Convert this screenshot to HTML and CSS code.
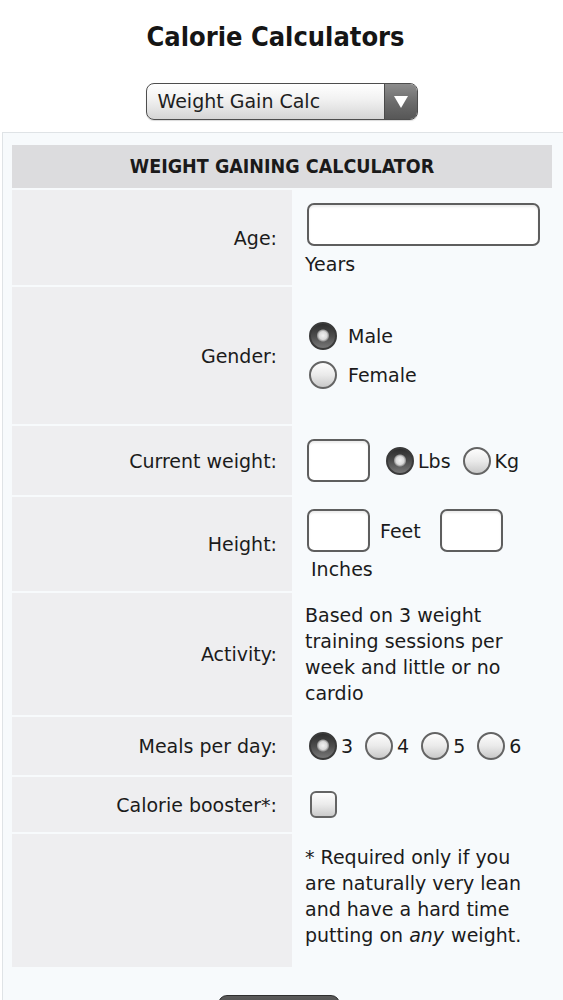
FILE: index.html
```html
<!DOCTYPE html>
<html lang="en">
<head>
<meta charset="utf-8">
<title>Calorie Calculators</title>
<link rel="stylesheet" href="styles.css">
</head>
<body>
<h1 class="title">Calorie Calculators</h1>
<div class="picker">
  <div class="select">
    <span class="select-text">Weight Gain Calc</span>
    <span class="select-arrow"><svg width="16" height="14" viewBox="0 0 16 14"><path d="M1 1 L15 1 L8 13 Z" fill="#fff"/></svg></span>
  </div>
</div>
<div class="panel">
  <div class="calc">
    <div class="head">WEIGHT GAINING CALCULATOR</div>

    <div class="label r-age">Age:</div>
    <div class="value r-age age-value">
      <div class="stack">
        <input type="text" class="field field-wide">
        <span class="unit">Years</span>
      </div>
    </div>

    <div class="label r-gender">Gender:</div>
    <div class="value r-gender">
      <div class="stack gap-opts">
        <label class="opt"><input type="radio" name="g" class="radio" checked><span>Male</span></label>
        <label class="opt"><input type="radio" name="g" class="radio"><span>Female</span></label>
      </div>
    </div>

    <div class="label r-weight">Current weight:</div>
    <div class="value r-weight">
      <div class="inline">
        <input type="text" class="field field-small">
        <label class="opt tight first"><input type="radio" name="w" class="radio" checked><span>Lbs</span></label>
        <label class="opt tight"><input type="radio" name="w" class="radio"><span>Kg</span></label>
      </div>
    </div>

    <div class="label r-height">Height:</div>
    <div class="value r-height height-value">
      <div class="stack">
        <div class="inline">
          <input type="text" class="field field-small">
          <span class="feet">Feet</span>
          <input type="text" class="field field-small">
        </div>
        <span class="unit inches">Inches</span>
      </div>
    </div>

    <div class="label r-activity">Activity:</div>
    <div class="value r-activity">
      <p class="text">Based on 3 weight training sessions per week and little or no cardio</p>
    </div>

    <div class="label r-meals">Meals per day:</div>
    <div class="value r-meals">
      <div class="inline meals">
        <label class="opt tight"><input type="radio" name="m" class="radio" checked><span>3</span></label>
        <label class="opt tight"><input type="radio" name="m" class="radio"><span>4</span></label>
        <label class="opt tight"><input type="radio" name="m" class="radio"><span>5</span></label>
        <label class="opt tight"><input type="radio" name="m" class="radio"><span>6</span></label>
      </div>
    </div>

    <div class="label r-booster">Calorie booster*:</div>
    <div class="value r-booster">
      <input type="checkbox" class="check">
    </div>

    <div class="label r-note"></div>
    <div class="value r-note note-value">
      <p class="text">* Required only if you are naturally very lean and have a hard time putting on <em>any</em>&nbsp;weight.</p>
    </div>
  </div>
  <div class="actions"><button class="btn">Calculate</button></div>
</div>
</body>
</html>
```

FILE: styles.css
```css
* { box-sizing: border-box; }

html, body {
  margin: 0;
  padding: 0;
  background: #ffffff;
}

body {
  font-family: "DejaVu Sans", sans-serif;
  font-size: 19px;
  line-height: 26px;
  color: #1b1b1b;
  width: 563px;
  overflow: hidden;
}

.title {
  margin: 21px 0 0;
  padding-right: 12px;
  font-family: "DejaVu Sans Condensed", "DejaVu Sans", sans-serif;
  font-size: 27px;
  line-height: 32px;
  font-weight: bold;
  text-align: center;
  color: #151515;
}

.picker {
  display: flex;
  justify-content: center;
  margin-top: 30px;
}

.select {
  display: flex;
  width: 272px;
  height: 37px;
  border: 1.5px solid #4e4e4e;
  border-radius: 8px;
  overflow: hidden;
  background: linear-gradient(#ffffff 0%, #f1f1f1 45%, #d5d5d5 100%);
  box-shadow: 0 1px 1px rgba(0,0,0,0.15);
}

.select-text {
  flex: 1;
  padding-left: 11px;
  line-height: 35px;
  color: #1e1e1e;
}

.select-arrow {
  width: 33px;
  display: flex;
  align-items: center;
  justify-content: center;
  background: linear-gradient(#8c8c8c 0%, #6a6a6a 55%, #575757 100%);
  border-left: 1px solid #4a4a4a;
}

.panel {
  margin: 12px 0 0 2px;
  width: 580px;
  border: 1px solid #dfe3e6;
  border-right: none;
  background: #f7fafc;
  padding: 12px 0 0 9px;
  height: 900px;
}

.calc {
  width: 540px;
  display: grid;
  grid-template-columns: 280px 260px;
  row-gap: 2px;
}

.head {
  grid-column: 1 / 3;
  height: 43px;
  background: #dcdcde;
  font-family: "DejaVu Sans Condensed", "DejaVu Sans", sans-serif;
  font-weight: bold;
  font-size: 19.5px;
  text-align: center;
  line-height: 43px;
  color: #1a1a1a;
}

.label {
  background: #eeeef0;
  display: flex;
  align-items: center;
  justify-content: flex-end;
  padding-right: 15px;
}

.value {
  display: flex;
  align-items: center;
  padding-left: 13px;
}

.r-age { height: 95px; }
.r-gender { height: 137px; }
.r-weight { height: 69px; }
.r-height { height: 94px; }
.r-activity { height: 122px; }
.r-meals { height: 58px; }
.r-booster { height: 55px; }
.r-note { height: 133px; }

.age-value { padding-top: 4px; }
.height-value { padding-top: 3px; }
.note-value { padding-bottom: 9px; }

.stack {
  display: flex;
  flex-direction: column;
  align-items: flex-start;
}

.gap-opts { gap: 11px; }

.inline {
  display: flex;
  align-items: center;
}

.field {
  margin: 0 0 0 2px;
  height: 43px;
  border: 2px solid #5e5e5e;
  border-radius: 7px;
  background: #ffffff;
  box-shadow: inset 0 2px 2px rgba(0,0,0,0.08);
  font: inherit;
  outline: none;
}

.field-wide { width: 233px; margin-bottom: 5px; }
.field-small { width: 63px; }

.unit { display: block; }
.inches { padding-left: 6px; margin-top: 4px; }

.feet { margin: 0 17px 0 10px; }

.opt {
  display: flex;
  align-items: center;
  gap: 11px;
}

.opt.tight { gap: 4px; }
.opt.first { margin-left: 16px; margin-right: 8px; }

.meals .opt { margin-right: 8px; }

.radio {
  appearance: none;
  -webkit-appearance: none;
  margin: 0 0 0 4px;
  width: 28px;
  height: 28px;
  border-radius: 50%;
  border: 2px solid #646464;
  background: linear-gradient(#fdfdfd 0%, #eaeaea 50%, #c9c9c9 100%);
  flex: none;
}

.opt.tight .radio { margin-left: 4px; }
.opt.first .radio { margin-left: 0; }

.radio:checked {
  border-color: #3a3a3a;
  background:
    radial-gradient(circle at 50% 48%, #f2f2f2 0, #d9d9d9 4px, #9a9a9a 5.5px, transparent 6.5px),
    linear-gradient(#2e2e2e 0%, #4c4c4c 50%, #777777 100%);
}

.check {
  appearance: none;
  -webkit-appearance: none;
  margin: 0 0 0 5px;
  width: 27px;
  height: 27px;
  border-radius: 6px;
  border: 2px solid #646464;
  background: linear-gradient(#fdfdfd 0%, #ebebeb 50%, #cbcbcb 100%);
}

.text {
  margin: 0;
  width: 240px;
}

.text em { font-style: italic; padding-right: 1px; }

.actions {
  display: flex;
  justify-content: center;
  width: 540px;
  padding-right: 6px;
  margin-top: 28px;
}

.btn {
  width: 122px;
  height: 42px;
  border: 1px solid #2e2e2e;
  border-radius: 9px;
  background: linear-gradient(#5a5a5a, #333333);
  color: #ffffff;
  font: inherit;
  font-weight: bold;
}
```
